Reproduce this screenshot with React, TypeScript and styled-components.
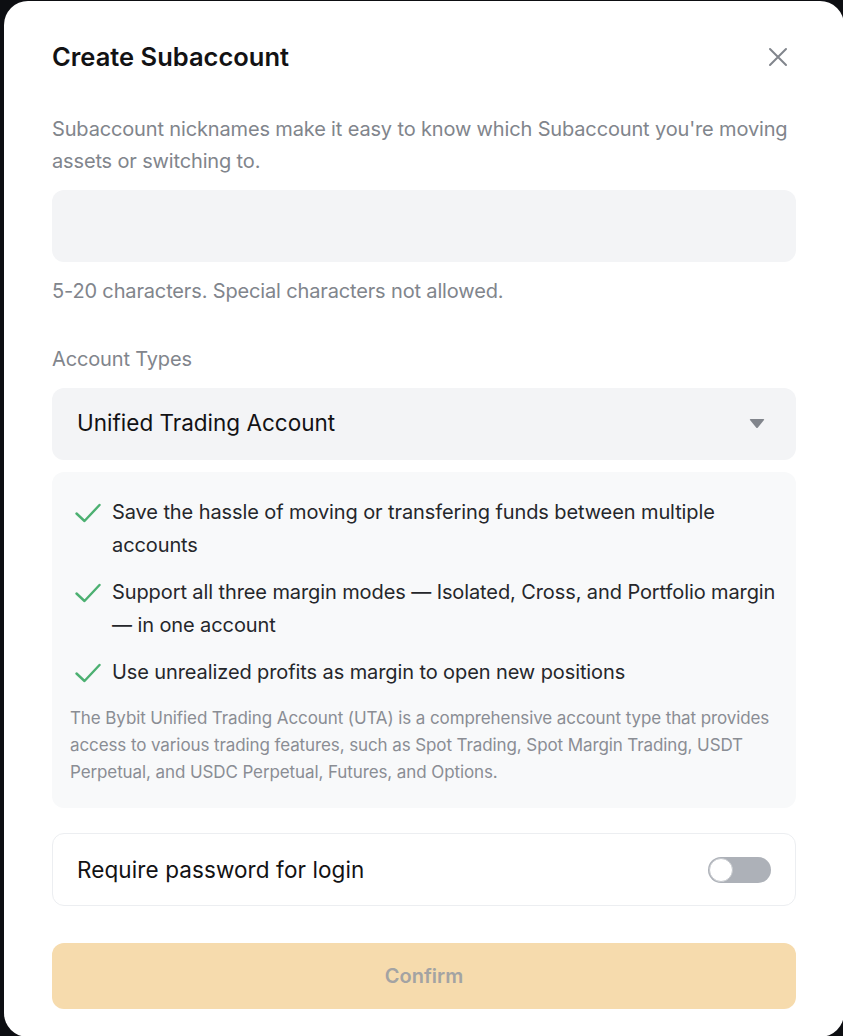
import React from "react"
import styled, { createGlobalStyle } from "styled-components"

const GlobalStyle = createGlobalStyle`
  html, body {
    margin: 0;
    padding: 0;
    background: #0d0e12;
  }
  body {
    font-family: "Inter", "Liberation Sans", sans-serif;
    -webkit-font-smoothing: antialiased;
  }
`

const Page = styled.div`
  min-height: 1036px;
  padding: 1px 0 0 4px;
  box-sizing: border-box;
  overflow: hidden;
`

const Modal = styled.div`
  width: 840px;
  box-sizing: border-box;
  background: #ffffff;
  border-radius: 24px;
  padding: 40px 48px 28px;
  display: flex;
  flex-direction: column;
`

const Header = styled.div`
  display: flex;
  align-items: center;
  justify-content: space-between;
`

const Title = styled.h2`
  margin: 0;
  font-size: 25.5px;
  line-height: 32px;
  font-weight: 600;
  color: #121214;
`

const CloseButton = styled.button`
  border: 0;
  background: transparent;
  padding: 0;
  margin-right: 6px;
  width: 24px;
  height: 24px;
  display: flex;
  align-items: center;
  justify-content: center;
  cursor: pointer;
`

const Hint = styled.p<{ $top: number; $lh?: number }>`
  margin: ${p => p.$top}px 0 0;
  font-size: 20px;
  line-height: ${p => p.$lh ?? 32}px;
  color: #81858c;
  letter-spacing: -0.15px;
`

const Field = styled.div<{ $top: number }>`
  margin-top: ${p => p.$top}px;
  height: 72px;
  border-radius: 12px;
  background: #f3f4f6;
  display: flex;
  align-items: center;
  justify-content: space-between;
  padding: 0 31px 0 25px;
  box-sizing: border-box;
`

const NameInput = styled.input`
  border: 0;
  outline: none;
  background: transparent;
  width: 100%;
  font: inherit;
  font-size: 20px;
  color: #121214;
`

const FieldValue = styled.span`
  font-size: 22.5px;
  line-height: 30px;
  color: #121214;
  margin-top: -3px;
`

const Caret = styled.svg`
  flex: none;
  margin-top: -2px;
`

const InfoBox = styled.div`
  margin-top: 12px;
  border-radius: 12px;
  background: #f8f9fa;
  padding: 24px 18px 22px;
  display: flex;
  flex-direction: column;
  gap: 14px;
`

const Benefit = styled.div`
  display: flex;
  align-items: flex-start;
  gap: 11px;
  padding-left: 5px;
`

const CheckIcon = styled.svg`
  flex: none;
  width: 26px;
  height: 20px;
  margin-top: 7px;
`

const BenefitText = styled.span`
  font-size: 20px;
  line-height: 33px;
  color: #25272b;
  letter-spacing: -0.1px;
`

const Note = styled.p`
  margin: 2px 0 0;
  font-size: 17px;
  line-height: 27px;
  color: #8a8d94;
  letter-spacing: -0.1px;
`

const ToggleRow = styled.div`
  margin-top: 25px;
  height: 73px;
  box-sizing: border-box;
  border: 1px solid #eceef1;
  border-radius: 12px;
  display: flex;
  align-items: center;
  justify-content: space-between;
  padding: 0 24px 0 24px;
`

const ToggleLabel = styled.span`
  font-size: 22.5px;
  color: #121214;
  letter-spacing: 0.1px;
`

const Switch = styled.button<{ $on: boolean }>`
  position: relative;
  width: 63px;
  height: 26px;
  border: 0;
  padding: 0;
  border-radius: 13px;
  background: ${p => (p.$on ? "#f7a600" : "#adb1b8")};
  cursor: pointer;
`

const Knob = styled.span<{ $on: boolean }>`
  position: absolute;
  top: 1px;
  left: ${p => (p.$on ? "38px" : "1px")};
  width: 24px;
  height: 24px;
  box-sizing: border-box;
  border-radius: 50%;
  background: #ffffff;
  border: 1px solid #c4c7cc;
`

const ConfirmButton = styled.button`
  margin-top: 37px;
  height: 66px;
  border: 0;
  border-radius: 12px;
  background: #f6dbad;
  color: #a3a3a3;
  font-family: inherit;
  font-size: 20px;
  font-weight: 600;
  cursor: not-allowed;
`

const benefits = [
  "Save the hassle of moving or transfering funds between multiple accounts",
  "Support all three margin modes — Isolated, Cross, and Portfolio margin — in one account",
  "Use unrealized profits as margin to open new positions",
]

export default function App() {
  const [requirePassword, setRequirePassword] = React.useState(false)
  return (
    <Page>
      <GlobalStyle />
      <Modal>
        <Header>
          <Title>Create Subaccount</Title>
          <CloseButton aria-label="Close">
            <svg width="20" height="20" viewBox="0 0 20 20">
              <path d="M2 2 L18 18 M18 2 L2 18" stroke="#81858c" strokeWidth="2" strokeLinecap="round" />
            </svg>
          </CloseButton>
        </Header>
        <Hint $top={40}>
          Subaccount nicknames make it easy to know which Subaccount you're moving assets or switching to.
        </Hint>
        <Field $top={13}>
          <NameInput aria-label="Subaccount nickname" />
        </Field>
        <Hint $top={15} $lh={28}>5-20 characters. Special characters not allowed.</Hint>
        <Hint $top={40} $lh={28}>Account Types</Hint>
        <Field $top={15}>
          <FieldValue>Unified Trading Account</FieldValue>
          <Caret width="16" height="11" viewBox="0 0 16 11">
            <path d="M1.5 1 H14.5 Q15.6 1 15 2 L8.9 9.6 Q8 10.6 7.1 9.6 L1 2 Q0.4 1 1.5 1 Z" fill="#81858c" />
          </Caret>
        </Field>
        <InfoBox>
          {benefits.map(text => (
            <Benefit key={text}>
              <CheckIcon viewBox="0 0 26 20">
                <path d="M1.5 10.5 L9.5 18 L24.5 2" fill="none" stroke="#4cb071" strokeWidth="2.4" strokeLinecap="round" strokeLinejoin="round" />
              </CheckIcon>
              <BenefitText>{text}</BenefitText>
            </Benefit>
          ))}
          <Note>
            The Bybit Unified Trading Account (UTA) is a comprehensive account type that provides access to various trading features, such as Spot Trading, Spot Margin Trading, USDT Perpetual, and USDC Perpetual, Futures, and Options.
          </Note>
        </InfoBox>
        <ToggleRow>
          <ToggleLabel>Require password for login</ToggleLabel>
          <Switch $on={requirePassword} onClick={() => setRequirePassword(v => !v)} aria-label="Require password for login">
            <Knob $on={requirePassword} />
          </Switch>
        </ToggleRow>
        <ConfirmButton disabled>Confirm</ConfirmButton>
      </Modal>
    </Page>
  )
}
